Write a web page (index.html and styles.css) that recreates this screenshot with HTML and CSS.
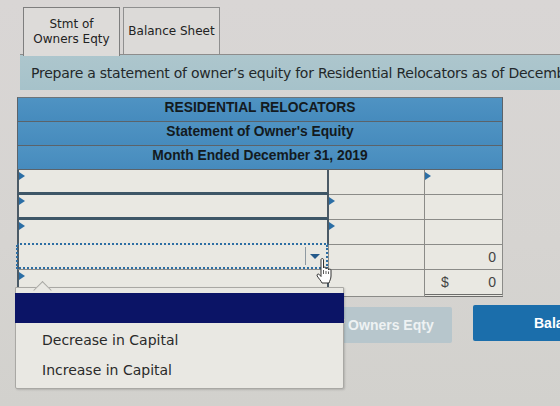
FILE: index.html
```html
<!DOCTYPE html>
<html lang="en">
<head>
    <meta charset="UTF-8">
    <title>Stmt of Owners Eqty</title>
    <link rel="stylesheet" href="styles.css">
</head>
<body>
    <!-- tabs -->
    <div class="tabs">
        <div class="tab active">Stmt of<br>Owners Eqty</div>
        <div class="tab">Balance Sheet</div>
    </div>

    <div class="prompt">Prepare a statement of owner’s equity for Residential Relocators as of December 31, 2019.</div>

    <!-- statement -->
    <div class="sheet">
        <div class="title-row">RESIDENTIAL RELOCATORS</div>
        <div class="title-row">Statement of Owner's Equity</div>
        <div class="title-row">Month Ended December 31, 2019</div>

        <div class="line">
            <div class="cell label mark"></div>
            <div class="cell"></div>
            <div class="cell mark"></div>
        </div>
        <div class="line">
            <div class="cell label mark"></div>
            <div class="cell mark"></div>
            <div class="cell"></div>
        </div>
        <div class="line">
            <div class="cell label mark"></div>
            <div class="cell mark"></div>
            <div class="cell"></div>
        </div>
        <div class="line">
            <div class="cell select-cell">
                <div class="select">
                    <span class="select-arrow"></span>
                </div>
            </div>
            <div class="cell"></div>
            <div class="cell num">0</div>
        </div>
        <div class="line last">
            <div class="cell label mark"></div>
            <div class="cell"></div>
            <div class="cell num total"><span>$</span><span>0</span></div>
        </div>
    </div>

    <!-- prev / next -->
    <div class="nav">
        <button class="nav-btn off">Stmt of Owners Eqty</button>
        <button class="nav-btn">Balance Sheet</button>
    </div>

    <!-- open dropdown list -->
    <div class="menu">
        <div class="menu-item picked"></div>
        <div class="menu-item">Decrease in Capital</div>
        <div class="menu-item">Increase in Capital</div>
    </div>

    <svg class="pointer" width="20" height="28" viewBox="0 0 20 28">
        <path d="M6 2.5c0-1.2 2.5-1.2 2.5 0v8.5c0-1.2 2.5-1.2 2.5 0v1c0-1.2 2.5-1.2 2.5 0v1c0-1.2 2.5-1.2 2.5 0v6c0 3-1.5 5-2 7H7c-.8-2-3.3-4.5-4.8-7-.8-1.4.8-2.6 2-1.6L6 19.5z" fill="#fff" stroke="#333" stroke-width="1" stroke-linejoin="round"/>
        <path d="M8.5 13v4M11 14v3M13.5 14.5v2.5" stroke="#333" stroke-width=".8"/>
    </svg>
</body>
</html>
```

FILE: styles.css
```css
body {
    margin: 0;
    height: 406px;
    overflow: hidden;
    position: relative;
    background: linear-gradient(180deg, #d9d6d5 0%, #d6d4d1 60%, #d2d1cd 100%);
    font-family: "DejaVu Sans", Verdana, sans-serif;
    color: #222;
}

/* tabs */
.tabs {
    display: flex;
    gap: 3px;
    margin-left: 20px;
    padding: 7px 0 0 3px;
    height: 47px;
    border-bottom: 1px solid #8d8c8c;
}

.tab {
    width: 95px;
    height: 46px;
    border: 1px solid #8f8f8f;
    border-bottom: none;
    background: #dcdad8;
    font-size: 12px;
    line-height: 15px;
    text-align: center;
    display: flex;
    align-items: center;
    justify-content: center;
}

.tab.active {
    height: 48px;
    position: relative;
    z-index: 1;
    border-color: #7e7e7e;
    background: #dddbd9;
}

.prompt {
    margin-left: 20px;
    height: 35px;
    line-height: 36px;
    padding-left: 11px;
    background: linear-gradient(180deg, #adc6cd, #a6c2ca);
    font-size: 14px;
    letter-spacing: -0.25px;
    color: #23282a;
    white-space: nowrap;
    overflow: hidden;
}

/* statement table */
.sheet {
    margin: 7px 0 0 17px;
    width: 486px;
}

.title-row {
    height: 21px;
    padding-top: 2px;
    line-height: 24px;
    background: linear-gradient(180deg, #4f93c3, #468bbd);
    border: 1px solid #5b636a;
    border-top: none;
    text-align: center;
    font: bold 13.8px "Liberation Sans", Arial, sans-serif;
    color: #131a20;
}

.title-row:first-child {
    border-top: 1px solid #6d7479;
}

.line {
    display: grid;
    grid-template-columns: 312px 96px 78px;
    height: 25px;
}

.cell {
    position: relative;
    background: #e9e8e2;
    border-right: 1px solid #8b8b88;
    border-bottom: 1px solid #8b8b88;
    box-sizing: border-box;
}

.cell.label {
    border-left: 2px solid #4b5a66;
    border-bottom: 3px solid #3e5667;
    border-right: 2px solid #4b5a66;
}

.line:nth-child(6) .cell.label {
    border-bottom: 2px dotted #2d6ea3;
}

/* small input markers */
.cell.mark::before {
    content: "";
    position: absolute;
    left: 0;
    top: 2px;
    border-left: 6px solid #2b6ea5;
    border-top: 4px solid transparent;
    border-bottom: 4px solid transparent;
}

.select-cell {
    border-left: 2px solid #4b5a66;
    border-right: 1px solid #8b8b88;
}

.select {
    position: absolute;
    left: -3px;
    top: 0;
    right: 0;
    bottom: 0;
    border: 2px dotted #2d6ea3;
    border-top: none;
}

.select::after {
    content: "";
    position: absolute;
    right: 20px;
    top: 2px;
    bottom: 2px;
    border-left: 1px solid #8f9aa2;
}

.select-arrow {
    position: absolute;
    right: 6px;
    top: 9px;
    border-top: 5px solid #24598a;
    border-left: 5px solid transparent;
    border-right: 5px solid transparent;
}

.num {
    text-align: right;
    padding-right: 6px;
    font: 14px "Liberation Sans", Arial, sans-serif;
    line-height: 24px;
    color: #444;
}

.total {
    display: flex;
    justify-content: space-between;
    padding-left: 16px;
    border-bottom: 3px double #6d6d6b;
}

.line.last .cell.label {
    border-bottom: 1px solid #8b8b88;
}

/* prev / next buttons */
.nav {
    display: flex;
    gap: 21px;
    margin: 11px 0 0 276px;
}

.nav-btn {
    height: 36px;
    border: none;
    border-radius: 2px;
    font: bold 14px "Liberation Sans", Arial, sans-serif;
    color: #fff;
    background: #1b6eab;
    padding: 0 20px;
    text-align: left;
    white-space: nowrap;
}

.nav-btn.off {
    width: 176px;
    text-align: right;
    background: #b7c6cc;
    color: #eef2f3;
    margin-top: 1px;
}

.nav-btn:last-child {
    padding-left: 61px;
    margin-top: -1px;
}

/* dropdown list */
.menu {
    position: absolute;
    left: 15px;
    top: 287px;
    width: 329px;
    height: 102px;
    background: #e9e8e3;
    border: 1px solid #a9a8a4;
    border-radius: 0 0 2px 2px;
    box-shadow: 1px 1px 2px rgba(0, 0, 0, 0.15);
    padding-top: 5px;
    box-sizing: border-box;
    font-size: 14px;
    color: #2a2a2a;
}

.menu::before {
    content: "";
    position: absolute;
    left: 20px;
    top: -10px;
    width: 12px;
    height: 12px;
    background: #e9e8e3;
    border-left: 1px solid #a9a8a4;
    border-top: 1px solid #a9a8a4;
    transform: rotate(45deg) translate(4px, 4px);
}

.menu-item {
    height: 30px;
    line-height: 30px;
    padding-left: 26px;
}

.menu-item.picked {
    position: relative;
    background: #0b1466;
    margin: 0 -1px 2px -1px;
}

.pointer {
    position: absolute;
    left: 315px;
    top: 257px;
}
```
